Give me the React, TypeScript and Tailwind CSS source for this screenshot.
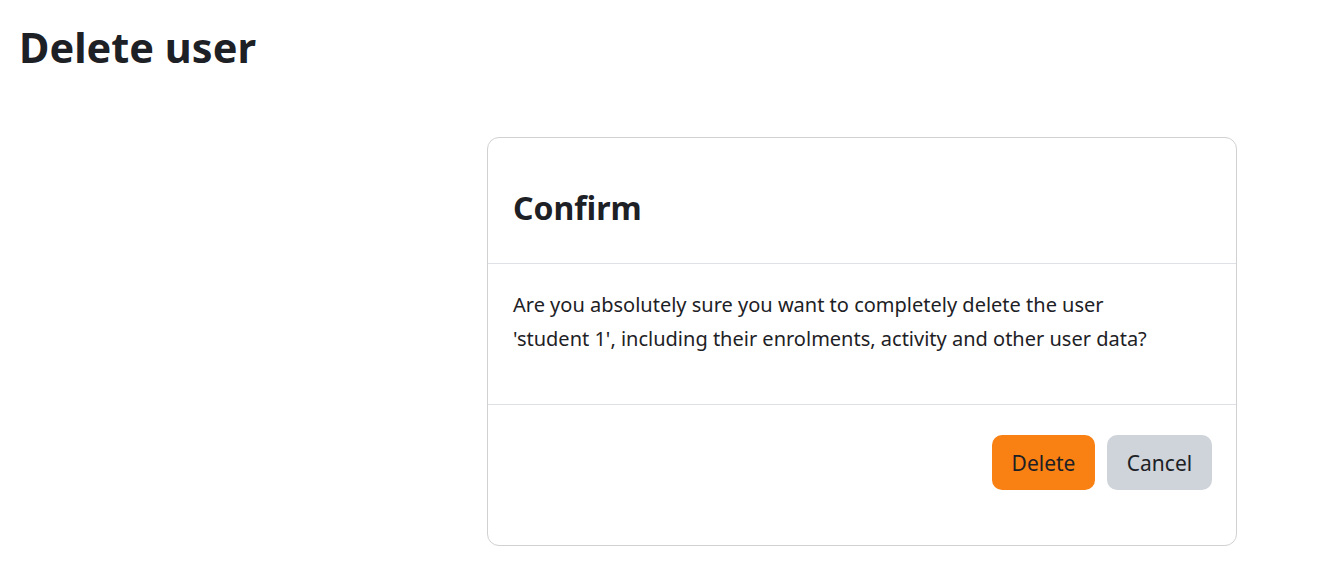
export default function App() {
    return (
        <div className="min-h-[586px] bg-white text-[#1d2125] font-['Noto_Sans',sans-serif]">
            <h2 className="pl-[19px] pt-[17px] text-[41.5px] font-bold leading-[60px]">Delete user</h2>

            <div className="flex pt-[60px]">
                <div className="w-[487px] shrink-0"></div>
                <div className="w-[750px] rounded-[12px] border border-[#d1d1d1] bg-white">
                    {/* Header */}
                    <div className="border-b border-[#dee2e6] px-[25px] pt-[49px] pb-[34px]">
                        <h3 className="text-[32px] font-bold leading-[42px]">Confirm</h3>
                    </div>

                    {/* Body */}
                    <div className="px-[25px] pt-[24px] pb-[48px]">
                        <p className="text-[20px] leading-[34px]">
                            Are you absolutely sure you want to completely delete the user {"'student\u00a01'"}, including their enrolments, activity and other user data?
                        </p>
                    </div>

                    {/* Footer */}
                    <div className="flex justify-end gap-3 border-t border-[#dee2e6] px-[24px] pt-[30px] pb-[55px]">
                        <button className="h-[55px] w-[103px] rounded-[10px] bg-[#f98012] pt-[2px] text-[21px]">Delete</button>
                        <button className="h-[55px] w-[105px] rounded-[10px] bg-[#ced4da] pt-[2px] text-[21px]">Cancel</button>
                    </div>
                </div>
            </div>
        </div>
    );
}
